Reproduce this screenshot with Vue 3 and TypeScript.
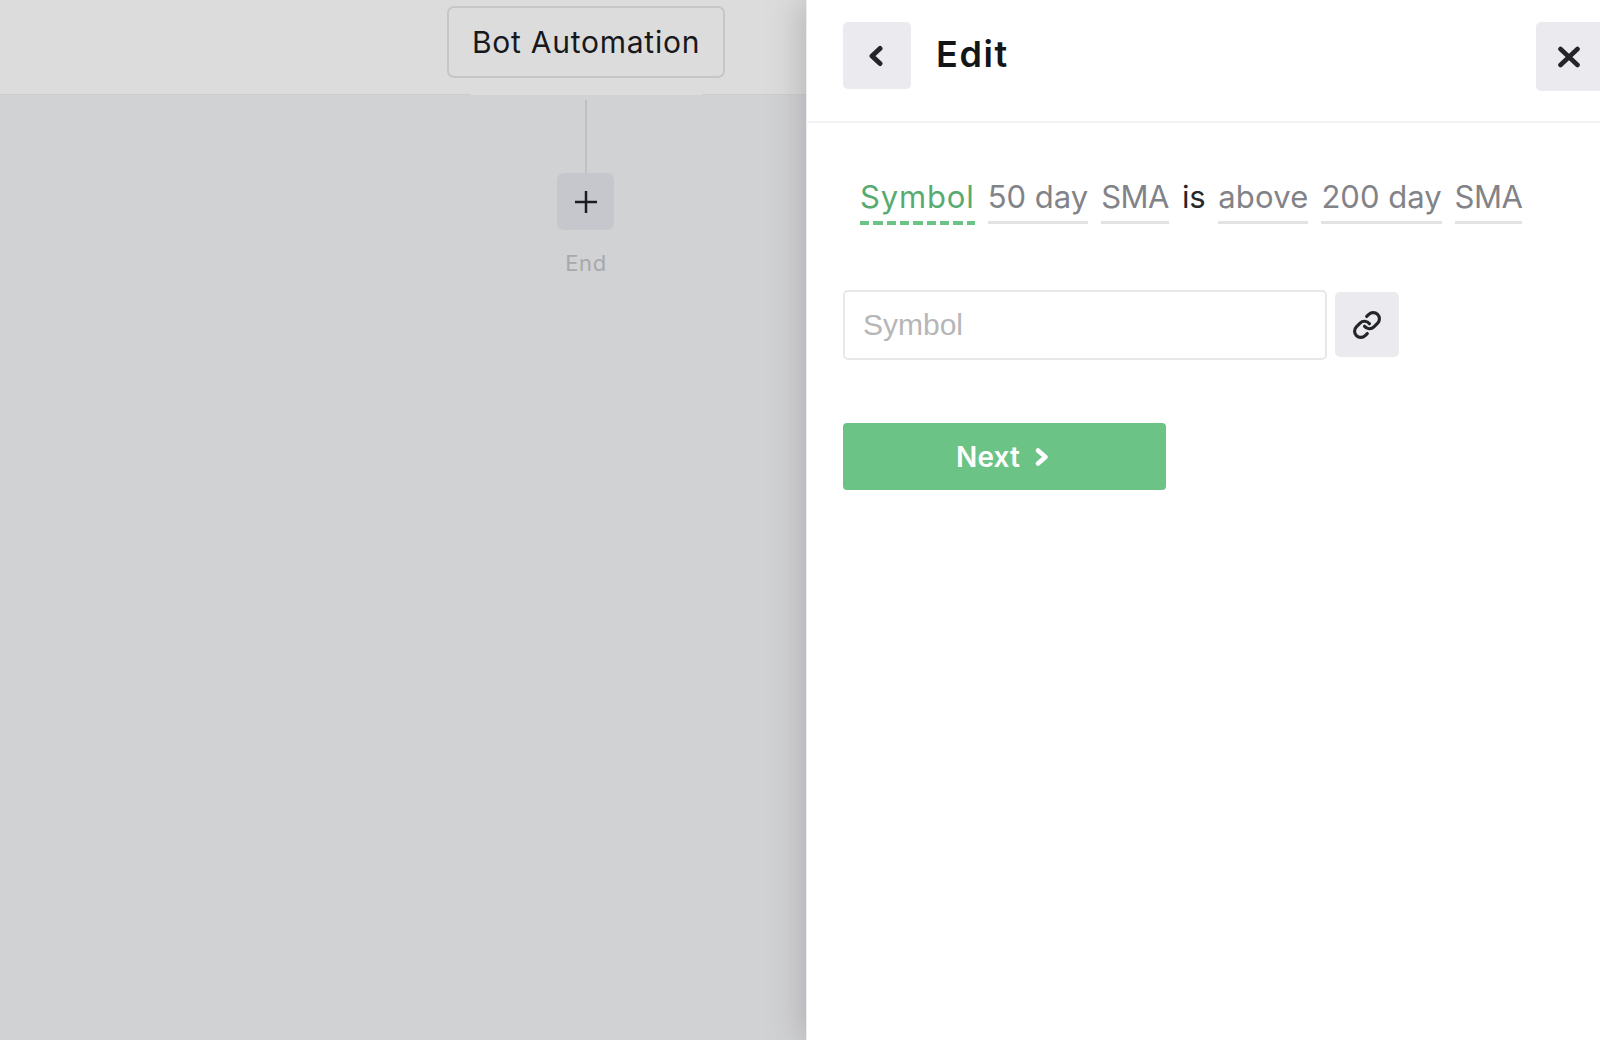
<script setup lang="ts">
interface Word { text: string; kind: 'active' | 'field' | 'plain'; spacing: string }
const words: Word[] = [
  { text: 'Symbol', kind: 'active', spacing: '0.85px' },
  { text: '50 day', kind: 'field', spacing: '0' },
  { text: 'SMA', kind: 'field', spacing: '-0.5px' },
  { text: 'is', kind: 'plain', spacing: '-0.3px' },
  { text: 'above', kind: 'field', spacing: '0.2px' },
  { text: '200 day', kind: 'field', spacing: '0' },
  { text: 'SMA', kind: 'field', spacing: '-0.5px' },
]
</script>

<template>
  <div class="page">
    <section class="canvas">
      <header class="canvas-head">
        <div class="flow-col">
          <div class="root-node">Bot Automation</div>
          <div class="head-strip"></div>
        </div>
      </header>
      <div class="flow-col flow-body">
        <div class="connector"></div>
        <div class="add-btn">
          <svg width="26" height="26" viewBox="0 0 26 26" fill="none" stroke="#1b1c20" stroke-width="2.5">
            <path d="M13 2v22M2 13h22" />
          </svg>
        </div>
        <div class="end">End</div>
      </div>
    </section>
    <aside class="panel">
      <header class="panel-head">
        <button class="icon-btn back" type="button" aria-label="Back">
          <svg width="18" height="22" viewBox="0 0 18 22" fill="none" stroke="#24252a" stroke-width="5" stroke-linecap="round" stroke-linejoin="round">
            <path d="M13 3.500 5 11l8 7.500" />
          </svg>
        </button>
        <h1 class="title">Edit</h1>
        <button class="icon-btn close" type="button" aria-label="Close">
          <svg class="close-icon" width="24" height="22" viewBox="0 0 24 22" fill="none" stroke="#24252a" stroke-width="4.6" stroke-linecap="round">
            <path d="M3.500 3 20.500 19M20.500 3 3.500 19" />
          </svg>
        </button>
      </header>
      <div class="panel-body">
        <div class="sentence">
          <span
            v-for="(w, i) in words"
            :key="i"
            class="word"
            :class="w.kind"
            :style="{ letterSpacing: w.spacing }"
          >{{ w.text }}</span>
        </div>
        <div class="symbol-row">
          <input class="symbol-input" type="text" placeholder="Symbol" />
          <button class="link-btn" type="button" aria-label="Link">
            <svg width="30" height="30" viewBox="0 0 24 24" fill="none" stroke="#24252a" stroke-width="2.5" stroke-linecap="round" stroke-linejoin="round">
              <path d="M10 13a5 5 0 0 0 7.540.540l3-3a5 5 0 0 0-7.070-7.070l-1.720 1.710" />
              <path d="M14 11a5 5 0 0 0-7.540-.540l-3 3a5 5 0 0 0 7.070 7.070l1.710-1.710" />
            </svg>
          </button>
        </div>
        <button class="next-btn" type="button">
          <span>Next</span>
          <svg width="16" height="20" viewBox="0 0 16 20" fill="none" stroke="#fff" stroke-width="4.600" stroke-linecap="round" stroke-linejoin="round">
            <path d="M4 3.500l7.500 6.500-7.500 6.500" />
          </svg>
        </button>
      </div>
    </aside>
  </div>
</template>

<style>
html, body { margin: 0; background: #fff; overflow: hidden; }
</style>

<style scoped>
.page {
  display: flex;
  width: 1600px;
  height: 1040px;
  overflow: hidden;
  font-family: Inter, "Open Sans", sans-serif;
}
.canvas {
  width: 806px;
  flex: none;
  background: #d1d2d4;
}
.canvas-head {
  height: 95px;
  box-sizing: border-box;
  padding: 6px 0 0 447px;
  background: #dcdcdc;
  border-bottom: 1px solid #cdcdce;
}
.flow-col {
  width: 278px;
  display: flex;
  flex-direction: column;
  align-items: center;
}
.flow-body { margin-left: 447px; padding-top: 5px; }
.root-node {
  width: 100%;
  height: 72px;
  box-sizing: border-box;
  border: 2px solid #c5c6c8;
  border-radius: 7px;
  display: flex;
  align-items: center;
  justify-content: center;
  font-size: 30px;
  letter-spacing: 0.75px;
  color: #17181b;
}
.head-strip {
  width: 232px;
  height: 1px;
  margin-top: 16px;
  background: #dcdcdc;
  flex: none;
}
.connector { width: 2px; height: 73px; background: #bfc0c4; }
.add-btn {
  width: 57px;
  height: 57px;
  margin-right: 1px;
  border-radius: 7px;
  background: #c6c7cc;
  display: flex;
  align-items: center;
  justify-content: center;
}
.end {
  margin-top: 20px;
  font-size: 22px;
  line-height: 26px;
  letter-spacing: 0.6px;
  color: #a8a9ac;
}
.panel {
  width: 794px;
  flex: none;
  background: #fff;
  box-shadow: -6px 0 30px rgba(120, 115, 120, 0.34), inset 1px 0 0 #ececee;
  position: relative;
  overflow: visible;
}
.panel-head {
  height: 123px;
  box-sizing: border-box;
  padding: 22px 0 0 37px;
  border-bottom: 2px solid #f2f2f4;
  display: flex;
  align-items: flex-start;
}
.icon-btn {
  border: 0;
  padding: 0;
  border-radius: 5px;
  background: #ebebef;
  display: flex;
  align-items: center;
  justify-content: center;
}
.back { width: 68px; height: 67px; }
.back svg { margin-right: 2px; }
.close {
  width: 69px;
  height: 69px;
  margin-left: auto;
  margin-right: -5px;
  flex: none;
}
.close-icon { margin-right: 4px; }
.title {
  margin: 0 0 0 25px;
  font-size: 36px;
  line-height: 64px;
  letter-spacing: 1.6px;
  font-weight: 600;
  color: #141518;
}
.panel-body { padding: 51px 0 0 37px; }
.sentence {
  display: flex;
  gap: 13px;
  padding-left: 17px;
  align-items: flex-start;
  font-size: 31px;
  line-height: 46px;
}
.word { padding-bottom: 3px; height: 44px; white-space: nowrap; }
.field { color: #828388; border-bottom: 3px solid #e3e3e5; }
.plain { color: #26272b; }
.active {
  color: #57ab70;
  padding-bottom: 7px;
  background: repeating-linear-gradient(90deg, #6cc386 0 9.33px, transparent 9.33px 13.33px) left bottom / 100% 4px no-repeat;
}
.symbol-row {
  margin-top: 65px;
  display: flex;
  align-items: flex-start;
  gap: 8px;
}
.symbol-input {
  width: 484px;
  height: 70px;
  box-sizing: border-box;
  border: 2px solid #e8e8ea;
  border-radius: 5px;
  padding: 0 18px;
  font-family: "Liberation Sans", Arial, sans-serif;
  font-size: 30px;
  color: #333;
  outline: none;
}
.symbol-input::placeholder { color: #b6b6b8; opacity: 1; }
.link-btn {
  width: 64px;
  height: 65px;
  margin-top: 2px;
  border: 0;
  padding: 0;
  border-radius: 5px;
  background: #ebebef;
  display: flex;
  align-items: center;
  justify-content: center;
}
.next-btn {
  margin-top: 63px;
  width: 323px;
  height: 67px;
  border: 0;
  padding: 0 3px 0 0;
  border-radius: 4px;
  background: #6cc386;
  color: #fff;
  font-family: inherit;
  font-size: 28px;
  font-weight: 600;
  letter-spacing: 0.1px;
  display: flex;
  align-items: center;
  justify-content: center;
  gap: 14px;
}
</style>
